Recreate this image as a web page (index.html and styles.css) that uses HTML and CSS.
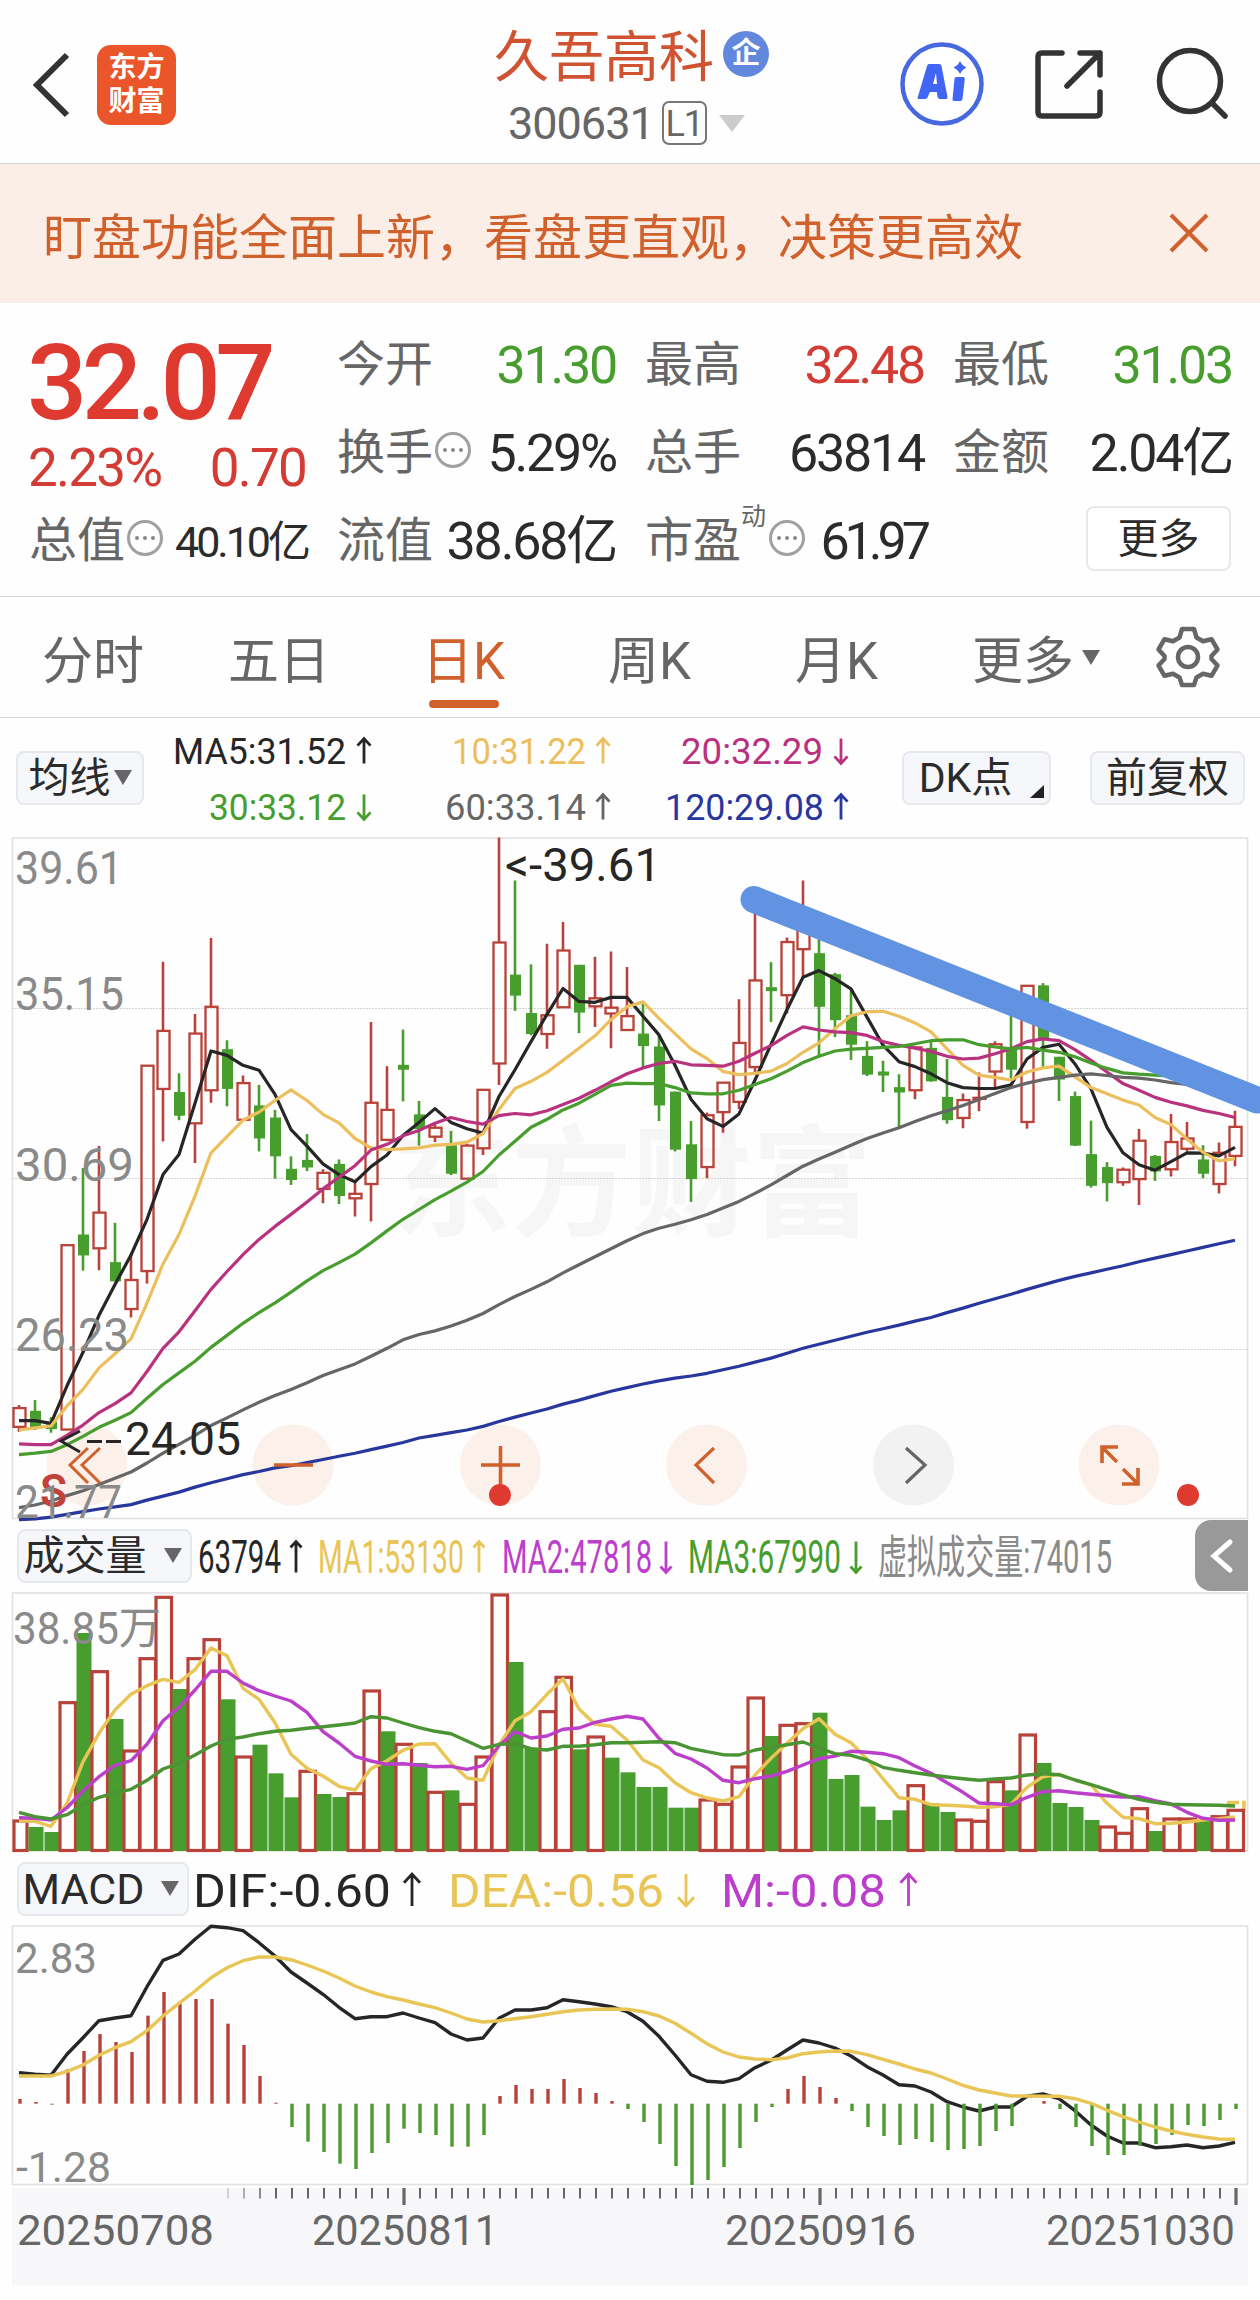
FILE: index.html
```html
<!DOCTYPE html>
<html lang="zh-CN">
<head>
    <meta charset="UTF-8">
    <meta name="viewport" content="width=device-width, initial-scale=1.0">
    <title>久吾高科 300631</title>
    <link rel="stylesheet" href="styles.css">
</head>
<body>

    <header class="topbar">
        <svg class="back" width="44" height="70" viewBox="0 0 44 70"><path d="M37 5 7 35l30 30"/></svg>
        <div class="logo">东方<br>财富</div>
        <div class="stock">
            <div class="stock-name">久吾高科<span class="badge">企</span></div>
            <div class="stock-code">300631<span class="level">L1</span><i class="tri tri-light"></i></div>
        </div>
        <div class="tools">
            <svg width="86" height="86" viewBox="0 0 86 86">
                <circle cx="43" cy="43" r="39.500" fill="#fff" stroke="#4868e0" stroke-width="4.500"/>
                <path d="M30 23h10q2 0 2.500 2l6 31q.4 2-1.600 2h-6q-2 0-2.300-2l-.8-5h-7l-2 5q-.8 2-2.800 2h-6q-2 0-1.200-2l9.200-31q.5-2 2-2zM34 43h4l-1-11z" fill="#4166f6" fill-rule="evenodd"/>
                <path d="M57 36h7q2 0 1.800 2l-2.300 20q-.3 2-2.300 2h-6q-2 0-1.700-2l2-20q.2-2 1.500-2z" fill="#4166f6"/>
                <path d="M61 20q2 4.500 6.500 6.500-4.500 2-6.500 6.500-2-4.500-6.500-6.500 4.500-2 6.500-6.500z" fill="#4166f6"/>
            </svg>
            <svg width="72" height="72" viewBox="0 0 72 72" class="line-icon">
                <path d="M28 5H8q-4 0-4 4v55q0 4 4 4h54q4 0 4-4V44"/>
                <path d="M46 5h20v22M66 5 33 38"/>
            </svg>
            <svg width="74" height="74" viewBox="0 0 74 74" class="line-icon">
                <circle cx="35" cy="34" r="30.500"/>
                <path d="m57 56 13 13"/>
            </svg>
        </div>
    </header>

    <div class="notice">
        <span>盯盘功能全面上新，看盘更直观，决策更高效</span>
        <svg width="40" height="40" viewBox="0 0 40 40"><path d="m2 2 36 36M38 2 2 38"/></svg>
    </div>

    <section class="quote">
        <div class="price-box">
            <div class="price">32.07</div>
            <div class="change"><span>2.23%</span><span>0.70</span></div>
        </div>
        <div class="cell"><label>今开</label><b class="down">31.30</b></div>
        <div class="cell"><label>最高</label><b class="up">32.48</b></div>
        <div class="cell"><label>最低</label><b class="down">31.03</b></div>
        <div class="cell"><label>换手</label><i class="info"></i><b>5.29%</b></div>
        <div class="cell"><label>总手</label><b>63814</b></div>
        <div class="cell"><label>金额</label><b>2.04亿</b></div>
        <div class="cell"><label>总值</label><i class="info"></i><b class="small">40.10亿</b></div>
        <div class="cell"><label>流值</label><b>38.68亿</b></div>
        <div class="cell"><label>市盈<sup>动</sup></label><i class="info info-pe"></i><b class="pe">61.97</b></div>
        <div class="cell"><button class="more-btn">更多</button></div>
    </section>

    <nav class="tabs">
        <a>分时</a>
        <a>五日</a>
        <a class="active">日K</a>
        <a>周K</a>
        <a>月K</a>
        <a>更多<i class="tri"></i></a>
        <svg width="64" height="64" viewBox="0 0 64 64" class="gear">
            <path d="M26 4h12l2.500 8.500 6.500 3.700 8.500-2 6 10.300-6 6.500v3l6 6.500-6 10.300-8.500-2-6.500 3.700L38 60H26l-2.500-7.500-6.500-3.700-8.500 2-6-10.300 6-6.500v-3l-6-6.500 6-10.300 8.500 2 6.500-3.700z"/>
            <circle cx="32" cy="32" r="10"/>
        </svg>
    </nav>

    <section class="ma-row">
        <button class="pill pill-ma">均线<i class="tri"></i></button>
        <svg id="ma-values" width="720" height="118" viewBox="150 719 720 118"></svg>
        <button class="pill pill-dk">DK点<i class="corner"></i></button>
        <button class="pill pill-fq">前复权</button>
    </section>

    <svg id="kline" width="1260" height="682" viewBox="0 837 1260 682"></svg>

    <section class="sub-row vol-row">
        <button class="pill pill-vol">成交量<i class="tri"></i></button>
        <svg id="vol-values" width="1003" height="73" viewBox="192 1519 1003 73"></svg>
        <button class="side-tab"><svg width="24" height="36" viewBox="0 0 24 36"><path d="M20 4 4 18l16 14"/></svg></button>
    </section>

    <svg id="volume" width="1260" height="260" viewBox="0 1592 1260 260"></svg>

    <section class="sub-row">
        <button class="pill pill-macd">MACD<i class="tri"></i></button>
        <svg id="macd-values" width="1003" height="73" viewBox="189 1852 1003 73"></svg>
    </section>

    <svg id="macd" width="1260" height="375" viewBox="0 1925 1260 375"></svg>

    <script src="chart.js"></script>
</body>
</html>
```
FILE: styles.css
```css
body {
    margin: 0;
    width: 1260px;
    height: 2300px;
    overflow: hidden;
    background: #fefefe;
    color: #2b2b2b;
    font-family: Roboto, "Noto Sans CJK SC", sans-serif;
}
svg {
    display: block;
    flex: none;
    overflow: visible;
}
button {
    font-family: inherit;
    color: inherit;
    padding: 0;
}

.topbar {
    position: relative;
    display: flex;
    align-items: center;
    height: 163px;
    border-bottom: 1px solid #d6d6d6;
}
.back {
    margin: 6px 0 0 30px;
    fill: none;
    stroke: #333;
    stroke-width: 6;
}
.logo {
    width: 79px;
    height: 80px;
    margin: 6px 0 0 23px;
    padding-top: 6px;
    box-sizing: border-box;
    border-radius: 14px;
    background: #ea562a;
    color: #fff;
    font-size: 28px;
    font-weight: 700;
    line-height: 34px;
    text-align: center;
}
.stock {
    width: 300px;
    margin: 16px 0 0 318px;
}
.stock-name {
    display: flex;
    align-items: center;
    height: 60px;
    margin-top: -4px;
    color: #cf5330;
    font-size: 55px;
}
.badge {
    width: 46px;
    height: 46px;
    margin: 4px 0 0 9px;
    border-radius: 50%;
    background: #6288de;
    color: #fff;
    font-size: 29px;
    font-weight: 700;
    line-height: 44px;
    text-align: center;
}
.stock-code {
    display: flex;
    align-items: center;
    height: 60px;
    margin: 11px 0 0 14px;
    color: #666;
    font-size: 45px;
    letter-spacing: -1px;
}
.level {
    width: 41px;
    height: 40px;
    margin-left: 8px;
    border: 2px solid #777;
    border-radius: 7px;
    font-size: 36px;
    line-height: 42px;
    text-align: center;
}
.tri {
    width: 0;
    height: 0;
    border: 9px solid transparent;
    border-top: 15px solid #666;
    border-bottom: 0;
}
.tri-light {
    margin-left: 12px;
    border-width: 17px 13px 0;
    border-top-color: #ccc;
}
.tools {
    display: flex;
    align-items: center;
    margin: 5px 0 0 105px;
    gap: 49px;
}
.line-icon {
    fill: none;
    stroke: #333;
    stroke-width: 5.5;
    stroke-linecap: round;
    stroke-linejoin: round;
}

.notice {
    display: flex;
    align-items: center;
    justify-content: space-between;
    height: 139px;
    padding: 0 51px 0 43px;
    background: #fbeee6;
    color: #d0602c;
    font-size: 49px;
}
.notice svg {
    margin-top: -2px;
    stroke: #d0602c;
    stroke-width: 4;
}

.quote {
    display: grid;
    grid-template-columns: repeat(4, 277px);
    grid-auto-rows: 88px;
    column-gap: 31px;
    height: 275px;
    padding: 18px 0 0 29px;
    border-bottom: 1px solid #d6d6d6;
}
.price-box {
    grid-row: span 2;
    color: #de3a30;
}
.price {
    height: 108px;
    margin: 8px 0 0 -2px;
    font-size: 106px;
    font-weight: 500;
    line-height: 108px;
    letter-spacing: -5.5px;
}
.change {
    display: flex;
    justify-content: space-between;
    margin-top: -1px;
    color: #d33c34;
    font-size: 53px;
    line-height: 64px;
    letter-spacing: -1.8px;
}
.change span:first-child {
    margin-left: -1px;
}
.cell {
    display: flex;
    align-items: center;
    white-space: nowrap;
}
.cell label {
    position: relative;
    color: #666;
    font-size: 48px;
    line-height: 70px;
}
.cell b {
    margin: 2px -2px 0 auto;
    font-size: 52px;
    font-weight: 400;
    line-height: 60px;
    letter-spacing: -2.2px;
}
.cell b.small {
    font-size: 43px;
    letter-spacing: -3px;
}
.cell b.pe {
    letter-spacing: -5px;
    margin-right: -4px;
}
.cell b.up {
    color: #d33c34;
}
.cell b.down {
    color: #479d2d;
}
.cell sup {
    position: absolute;
    left: 96px;
    top: -2px;
    font-size: 25px;
    line-height: 25px;
}
/* three dots in a circle */
.info {
    position: relative;
    flex: none;
    width: 30px;
    height: 30px;
    margin: -6px 0 0 2px;
    border: 3px solid #a0a0a0;
    border-radius: 50%;
}
.info::after {
    content: "";
    position: absolute;
    left: 13px;
    top: 13px;
    width: 4px;
    height: 4px;
    border-radius: 50%;
    background: #888;
    box-shadow: -8px 0 #888, 8px 0 #888;
}
.info-pe {
    margin-left: 28px;
}
.more-btn {
    width: 145px;
    height: 65px;
    margin: -5px -1px 0 auto;
    border: 2px solid #e8e8e8;
    border-radius: 8px;
    background: #fff;
    font-size: 41px;
    line-height: 58px;
}

.tabs {
    display: grid;
    grid-template-columns: 186px 194px 186px 187px 177px 184px 64px;
    align-items: center;
    height: 120px;
    padding-left: 42px;
    border-bottom: 1px solid #d6d6d6;
    color: #666;
    font-size: 51px;
}
.tabs a {
    position: relative;
    display: flex;
    align-items: center;
    height: 120px;
}
.tabs .tri {
    margin-left: 8px;
}
.tabs .active {
    color: #d0602c;
}
.tabs .active::after {
    content: "";
    position: absolute;
    left: 7px;
    bottom: 9px;
    width: 70px;
    height: 8px;
    border-radius: 4px;
    background: #d0602c;
}
.gear {
    fill: none;
    stroke: #666;
    stroke-width: 4.5;
    stroke-linejoin: round;
}

.ma-row {
    display: flex;
    align-items: center;
    height: 119px;
}
.pill {
    display: flex;
    align-items: center;
    justify-content: center;
    flex: none;
    box-sizing: border-box;
    height: 54px;
    border: 2px solid #e6e8ec;
    border-radius: 8px;
    background: #f6f7fa;
    font-size: 41px;
    line-height: 50px;
}
.pill-ma {
    width: 128px;
    margin: 0 6px 0 16px;
}
.pill-ma .tri {
    margin-left: 3px;
}
.pill-dk {
    position: relative;
    width: 149px;
    margin-left: 32px;
    padding-right: 22px;
}
.corner {
    position: absolute;
    right: 5px;
    bottom: 5px;
    border-left: 14px solid transparent;
    border-bottom: 13px solid #222;
}
.pill-fq {
    width: 155px;
    margin-left: 39px;
}

.sub-row {
    display: flex;
    align-items: center;
    height: 73px;
}
.pill-vol {
    width: 175px;
    margin-left: 17px;
    padding-right: 4px;
}
.pill-vol .tri {
    margin-left: 17px;
}
.pill-macd {
    width: 172px;
    margin-left: 17px;
    padding-right: 4px;
    font-size: 43px;
}
.pill-macd .tri {
    margin-left: 17px;
}
.side-tab {
    display: flex;
    align-items: center;
    justify-content: center;
    width: 53px;
    height: 71px;
    border: 0;
    border-radius: 16px 0 0 16px;
    background: #999;
}
.side-tab path {
    fill: none;
    stroke: #fff;
    stroke-width: 5;
    stroke-linecap: round;
}
```
FILE: chart.js
```js
const NS = 'http://www.w3.org/2000/svg';
const RED = '#b8423a', GREEN = '#479d2d';
const BLACK = '#262626', YELLOW = '#edbf5c', GOLD = '#e8c555', PINK = '#b9327f';
const PURPLE = '#bb3fcb', GRAY = '#666', BLUE = '#27379e', ORANGE = '#d0602c', LABEL = '#8a8a8a';

function add(svg, tag, attrs, text) {
    const el = document.createElementNS(NS, tag);
    for (const k in attrs) el.setAttribute(k, attrs[k]);
    if (text) el.textContent = text;
    svg.appendChild(el);
    return el;
}
// text stretched between x1 and x2 on the baseline y
function label(svg, s, x1, x2, y, size, color, weight) {
    add(svg, 'text', {x: x1 - 2, y: y, 'font-size': size, fill: color, 'font-weight': weight || 400,
        textLength: x2 - x1 + 4, lengthAdjust: 'spacingAndGlyphs'}, s);
}
function stroke(svg, d, color, w, extra) {
    return add(svg, 'path', Object.assign({d: d, fill: 'none', stroke: color, 'stroke-width': w}, extra));
}
function arrow(svg, x, y, up, color, h, w) {
    const t = y - h / 2, b = y + h / 2, a = w / 2, c = w * 0.55;
    stroke(svg, up ? `M${x} ${b}V${t + 1}M${x - a} ${t + c}L${x} ${t}L${x + a} ${t + c}`
                   : `M${x} ${t}V${b - 1}M${x - a} ${b - c}L${x} ${b}L${x + a} ${b - c}`, color, 2.8);
}
const cx = i => 19 + 16 * i;
function line(svg, values, fy, color, w) {
    stroke(svg, 'M' + values.map((v, i) => cx(i) + ' ' + fy(v).toFixed(1)).join('L'), color, w, {'stroke-linejoin': 'round'});
}
function frame(svg, y, h) {
    add(svg, 'rect', {x: 12.5, y: y, width: 1235, height: h, fill: 'none', stroke: '#e2e2e2', 'stroke-width': 1.6});
}

// ---- moving average values ----
const maBox = document.getElementById('ma-values');
[['MA5:31.52', 175, 344, 764, BLACK, 1], ['10:31.22', 454, 584, 764, YELLOW, 1], ['20:32.29', 683, 821, 764, PINK, 0],
 ['30:33.12', 211, 344, 820, GREEN, 0], ['60:33.14', 447, 584, 820, GRAY, 1], ['120:29.08', 667, 822, 820, BLUE, 1]
].forEach(([s, a, b, y, c, up], i) => {
    label(maBox, s, a, b, y, 37, c);
    arrow(maBox, [364, 603, 841][i % 3], y - 13, up, c, 25, 13);
});

// ---- candles: colour, high, body top, body bottom, low ----
const candles = [
    ['r',1288,1295,1337,1348],['g',1277,1301,1338,1344],['g',1315,1326,1342,1350],['r',930,930,1343,1343],['g',757,906,953,987],
    ['r',708,857,937,986],['g',880,968,1011,1011],['r',950,1008,1073,1092],['r',528,528,988,1016],['r',295,450,580,698],
    ['g',545,587,640,650],['r',412,456,657,746],['r',242,396,583,611],['g',471,491,580,619],['r',550,567,649,649],
    ['g',571,617,691,720],['g',627,644,731,781],['g',731,759,784,795],['g',681,739,756,764],['r',760,768,804,836],
    ['g',738,748,820,838],['r',790,815,825,866],['r',430,611,793,877],['r',529,627,694,697],['g',447,526,537,608],
    ['g',607,637,670,707],['r',660,667,687,699],['g',674,706,770,773],['r',703,707,781,781],['r',582,582,713,728],
    ['r',17,252,523,571],['g',113,324,371,405],['g',301,410,457,460],['r',255,415,457,490],['r',206,270,397,397],
    ['g',302,302,409,455],['r',284,377,395,441],['r',272,398,411,489],['r',307,417,448,448],['g',385,456,484,531],
    ['g',460,485,617,652],['g',586,586,716,720],['g',652,704,782,833],['r',633,639,755,780],['r',566,566,632,678],
    ['r',379,477,609,625],['r',165,337,531,545],['g',296,352,361,430],['r',241,251,370,411],['r',113,210,267,330],
    ['g',240,276,396,507],['g',320,323,426,464],['g',355,415,481,515],['g',473,506,548,551],['g',517,541,550,587],
    ['g',547,576,588,665],['r',485,487,583,603],['g',475,488,563,564],['g',513,598,650,658],['r',590,605,645,668],
    ['r',543,600,602,630],['r',473,480,541,581],['g',415,487,537,557],['r',349,349,654,669],['g',343,348,466,531],
    ['g',508,508,559,607],['g',586,596,707,708],['g',651,726,797,801],['g',744,755,791,832],['r',756,761,789,797],
    ['r',670,696,782,840],['g',728,730,765,786],['r',636,699,760,776],['r',654,691,714,720],['g',706,738,770,780],
    ['r',700,723,793,814],['r',629,665,730,753]
];
const ma5 = [1323,1323,1329,1245,1170,1087,1018,952,872,772,727,612,495,505,527,538,592,671,708,748,772,788,754,728,684,655,624,655,669,679,
    597,537,474,413,355,384,386,375,375,417,459,527,603,647,664,636,560,480,402,330,315,333,356,419,482,519,530,546,566,577,
    579,579,571,513,487,480,524,580,666,723,750,762,743,723,724,730,711];
const ma10 = [1344,1339,1335,1290,1253,1205,1173,1140,1060,972,906,820,723,687,650,632,606,582,606,637,656,691,712,716,714,712,706,704,699,680,
    626,579,563,543,516,489,461,425,396,385,422,456,490,512,541,548,545,540,523,498,477,445,416,407,406,417,432,452,490,527,
    549,554,560,542,533,529,553,577,591,605,616,644,660,692,722,741,736];
const ma20 = [1375,1377,1377,1356,1333,1305,1285,1261,1213,1161,1124,1077,1029,989,951,917,888,861,833,804,778,752,717,704,685,673,657,644,653,659,
    640,635,638,629,615,601,583,564,546,533,523,518,526,527,529,518,500,483,460,441,448,452,454,460,474,482,489,496,507,513,
    511,501,490,474,468,472,492,516,542,568,583,599,610,618,628,635,644];
const ma30 = [1399,1396,1392,1377,1358,1338,1322,1305,1273,1242,1216,1190,1159,1132,1105,1081,1059,1035,1010,987,969,950,925,898,872,850,828,809,789,765,
    728,697,666,648,627,612,592,572,567,568,568,577,589,591,591,583,570,557,540,521,507,495,491,489,487,485,479,472,470,470,
    481,486,490,487,493,498,508,522,534,544,547,549,551,555,560,566,572];
const ma60 = [1518,1512,1503,1491,1480,1466,1452,1438,1418,1396,1376,1356,1334,1317,1299,1282,1267,1253,1238,1222,1209,1196,1179,1161,1142,1130,1122,1111,1098,1083,
    1063,1045,1029,1012,992,974,956,938,920,904,892,883,873,861,847,832,814,795,774,753,737,722,706,691,679,667,653,640,629,617,
    604,590,577,567,559,554,549,546,550,554,556,560,566,570,570,570,570];
const ma120 = [1545,1543,1539,1533,1527,1521,1516,1511,1501,1492,1483,1472,1462,1453,1444,1437,1429,1424,1417,1410,1403,1396,1388,1380,1372,1362,1356,1350,1344,1336,
    1325,1315,1306,1297,1286,1277,1267,1257,1249,1241,1234,1228,1223,1217,1209,1201,1192,1183,1172,1161,1152,1143,1134,1125,1117,1109,1100,1092,1081,1071,
    1060,1050,1040,1029,1019,1009,1000,992,984,976,967,959,951,943,935,927,919];

const k = document.getElementById('kline');
const ky = v => 830 + v / 2.24;
label(k, '东方财富', 393, 870, 1227, 120, '#f6f6f6', 700);
frame(k, 838, 680.5);
[1008.5, 1178.5, 1349.5].forEach(y => stroke(k, `M12 ${y}H1248`, '#d2d2d2', 1, {'stroke-dasharray': '2 1'}));
[87, 293, 500.5, 706.5, 913.5, 1119].forEach((x, i) =>
    add(k, 'circle', {cx: x, cy: 1465, r: 40.5, fill: i === 4 ? '#f2f2f2' : '#fcf1ea'}));
candles.forEach(([c, h, t, b, l], i) => {
    const x = cx(i), color = c === 'r' ? RED : GREEN;
    if (c === 'r') {
        stroke(k, `M${x} ${ky(h)}V${ky(t)}M${x} ${ky(b)}V${ky(l)}`, color, 2.6);
        add(k, 'rect', {x: x - 5.5, y: ky(t), width: 12, height: Math.max(ky(b) - ky(t), 1), fill: 'none', stroke: color, 'stroke-width': 2.3});
    } else {
        stroke(k, `M${x} ${ky(h)}V${ky(l)}`, color, 2.6);
        add(k, 'rect', {x: x - 5, y: ky(t), width: 11, height: ky(b) - ky(t), fill: color});
    }
});
line(k, ma5, ky, BLACK, 3.2);
line(k, ma10, ky, YELLOW, 3.2);
line(k, ma20, ky, PINK, 3.2);
line(k, ma30, ky, GREEN, 3.2);
line(k, ma60, ky, GRAY, 3.2);
line(k, ma120, ky, BLUE, 3.2);

label(k, '<-39.61', 507, 659, 881, 46, BLACK);
stroke(k, 'M80 1431 61 1441l19 11M87 1441.500h15M106 1441.500h15', BLACK, 3);
label(k, '24.05', 127, 239, 1455, 46, BLACK);
label(k, 'S', 42, 65, 1507, 47, '#c2423a', 600);
label(k, '39.61', 17, 121, 884, 46, LABEL);
label(k, '35.15', 17, 122, 1009.5, 46, LABEL);
label(k, '30.69', 17, 132, 1180.5, 46, LABEL);
label(k, '26.23', 17, 127, 1350.5, 46, LABEL);
label(k, '21.77', 17, 120, 1517.5, 46, LABEL);

stroke(k, 'M88 1448 70 1465l18 18M100 1448l-18 17 18 18', ORANGE, 3);
stroke(k, 'M274 1465h39M481 1465h39M500.500 1446v39', ORANGE, 3.6);
stroke(k, 'M714 1448l-18 17 18 18', ORANGE, 3.2);
stroke(k, 'M906 1448l19 17-19 18', GRAY, 3.2);
stroke(k, 'M1102 1463v-16h16M1103 1448l14 14M1138 1468v16h-16M1137 1483l-14-14', ORANGE, 3.6);
add(k, 'circle', {cx: 500, cy: 1495, r: 11, fill: '#de3a30'});
add(k, 'circle', {cx: 1188, cy: 1495, r: 11, fill: '#de3a30'});

// trend line drawn by hand over the chart
stroke(k, 'M754 899.500 1257 1100', '#6193e2', 27, {'stroke-linecap': 'round'});

// ---- volume ----
const vt = document.getElementById('vol-values');
label(vt, '63794', 200, 279, 1573, 46, BLACK);
label(vt, 'MA1:53130', 320, 462, 1573, 46, GOLD);
label(vt, 'MA2:47818', 504, 650, 1573, 46, PURPLE);
label(vt, 'MA3:67990', 690, 839, 1573, 46, GREEN);
label(vt, '虚拟成交量:74015', 880, 1110, 1573, 46, LABEL);
arrow(vt, 296, 1557, 1, BLACK, 31, 11);
arrow(vt, 479, 1557, 1, GOLD, 31, 11);
arrow(vt, 666, 1557, 0, PURPLE, 31, 11);
arrow(vt, 856, 1557, 0, GREEN, 31, 11);

const vol = [930,951,966,575,369,482,627,720,443,259,537,443,386,568,738,704,790,862,781,852,861,848,540,664,700,759,844,841,880,738,
    252,456,715,602,499,718,678,743,787,831,831,893,893,867,880,768,561,678,643,638,608,807,795,890,930,901,824,880,906,927,
    931,812,841,672,759,879,891,930,948,967,893,963,924,924,932,917,898];
const volColor = 'rggrgrgrrrgrrgrgggrggrrgrgrgrrrggrrgrggggggrrrrgrrggggggrggrrrgrggggrrrgrrgrr';
const vma1 = [932,934,949,880,755,670,600,553,527,508,517,479,414,437,535,568,638,733,775,798,829,840,776,752,721,702,701,759,804,811,
    705,632,605,553,506,597,643,649,690,750,773,818,848,864,873,860,795,745,700,656,626,673,698,747,806,863,868,884,886,888,
    892,890,883,832,800,793,810,825,880,922,926,941,940,936,930,926,921];
const vma2 = [923,925,930,893,843,800,766,752,703,632,592,540,484,484,519,542,558,573,607,665,699,739,753,763,761,766,770,769,778,767,
    707,665,684,678,658,654,637,627,619,627,685,730,747,774,811,818,806,798,784,765,746,738,724,727,731,743,768,790,818,847,
    879,881,884,862,845,842,848,853,857,861,860,872,882,907,925,931,930];
const vma3 = [907,920,927,914,885,862,849,838,811,777,760,735,708,688,681,671,664,661,655,650,645,639,620,624,639,653,664,671,693,715,
    703,702,716,720,709,709,704,698,698,697,695,698,715,725,734,735,720,712,704,696,714,731,736,750,772,781,788,795,801,806,
    811,807,804,795,791,794,810,824,839,855,868,877,883,884,885,886,888];

const v = document.getElementById('volume');
const vy = n => 1510 + n / 3;
frame(v, 1593, 258);
stroke(v, 'M1227 1802.500h17v8', GOLD, 3.500, {'stroke-dasharray': '12 3'});
vol.forEach((n, i) => {
    const x = cx(i), y = vy(n);
    if (volColor[i] === 'r') {
        add(v, 'rect', {x: Math.max(x - 7, 14), y: y + 1, width: i ? 15.5 : 13, height: 1849.5 - y, fill: 'none', stroke: RED, 'stroke-width': 3.2});
    } else {
        add(v, 'rect', {x: x - 6.5, y: y, width: 15, height: 1851 - y, fill: GREEN});
    }
});
line(v, vma1, vy, GOLD, 3.4);
line(v, vma2, vy, PURPLE, 3.4);
line(v, vma3, vy, '#4a9433', 3.4);
label(v, '38.85万', 15, 159, 1644, 44, LABEL);

// ---- MACD ----
const mt = document.getElementById('macd-values');
label(mt, 'DIF:-0.60', 195, 389, 1906.5, 47, BLACK);
label(mt, 'DEA:-0.56', 450, 662, 1906.5, 47, GOLD);
label(mt, 'M:-0.08', 723, 884, 1906.5, 47, PURPLE);
arrow(mt, 412, 1890, 1, BLACK, 32, 16);
arrow(mt, 686, 1890, 0, GOLD, 32, 16);
arrow(mt, 908.5, 1890, 1, PURPLE, 32, 16);

const dif = [638,643,646,583,533,482,474,467,380,301,282,238,199,203,212,248,288,336,369,403,442,476,470,470,459,474,488,522,540,534,
    475,450,450,443,419,425,432,440,455,484,529,585,644,664,667,656,623,601,570,540,549,564,588,620,645,674,678,696,725,741,
    753,741,741,709,702,716,752,795,828,849,849,863,860,855,863,858,847];
const dea = [648,648,648,634,615,586,563,545,512,468,430,393,353,323,302,291,291,299,315,333,354,378,396,410,420,432,443,459,477,486,
    482,476,470,463,455,450,448,447,448,455,468,490,520,551,576,591,597,599,594,581,576,573,574,584,598,612,627,639,657,676,
    690,699,708,708,709,709,716,730,751,770,786,801,813,823,831,837,838];
const hist = [717,726,734,627,573,522,546,576,467,396,430,417,417,491,555,648,728,801,845,876,911,927,879,849,806,819,825,860,860,825,
    708,675,687,687,657,684,699,723,747,786,852,918,975,960,921,864,786,741,687,648,681,714,753,801,828,855,837,846,870,867,
    858,813,798,731,723,747,801,858,885,885,858,852,825,795,798,780,747];

const m = document.getElementById('macd');
const my = n => 1860 + n / 3;
const zero = 731;
frame(m, 1926, 258.5);
add(m, 'rect', {x: 12, y: 2188, width: 1236, height: 97.5, fill: '#f7f7fa'});
line(m, dif, my, BLACK, 3.4);
hist.forEach((n, i) => stroke(m, `M${cx(i) + 1} ${my(zero)}V${my(n)}`, n < zero ? RED : GREEN, 3.4));
line(m, dea, my, GOLD, 3.4);
label(m, '2.83', 17, 95, 1973, 43, LABEL);
label(m, '-1.28', 18, 109, 2182, 43, LABEL);

// date axis, first ticks fade in
for (let i = 13; i < 77; i++) {
    const big = i === 24 || i === 50 || i === 76;
    stroke(m, `M${cx(i) + 1} 2188V${big ? 2205 : 2198.5}`, GRAY, big ? 3.2 : 2, {opacity: Math.min(1, (i - 12) * 0.25)});
}
label(m, '20250708', 19, 212, 2245, 43, GRAY);
label(m, '20250811', 314, 496, 2245, 43, GRAY);
label(m, '20250916', 727, 914, 2245, 43, GRAY);
label(m, '20251030', 1048, 1233, 2245, 43, GRAY);
```
